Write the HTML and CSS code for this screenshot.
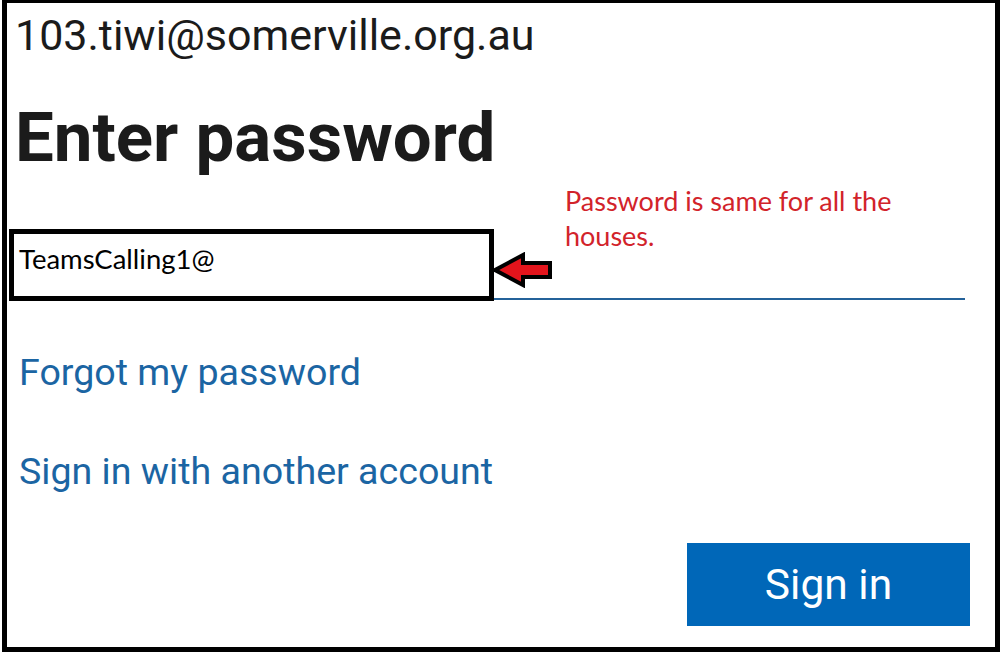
FILE: index.html
```html
<!DOCTYPE html>
<html>
<head>
<meta charset="utf-8">
<link rel="stylesheet" href="styles.css">
</head>
<body>
<div class="frame">
  <div class="email">103.tiwi@somerville.org.au</div>
  <h1 class="title">Enter password</h1>
  <div class="field">
    <div class="pw-box">TeamsCalling1@</div>
    <svg class="arrow" width="62" height="36" viewBox="0 0 62 36">
      <path d="M3 18 L31 3 L31 11 L58 11 L58 25 L31 25 L31 33 Z" fill="#e3141c" stroke="#000" stroke-width="4" stroke-linejoin="miter"/>
    </svg>
  </div>
  <a class="link first">Forgot my password</a>
  <a class="link second">Sign in with another account</a>
  <div class="actions">
    <button class="btn">Sign in</button>
  </div>
  <div class="note">Password is same for all the<br>houses.</div>
</div>
</body>
</html>
```

FILE: styles.css
```css
html, body {
  margin: 0;
  padding: 0;
  background: #fff;
}
.frame {
  position: relative;
  box-sizing: border-box;
  width: 998px;
  height: 652px;
  margin-left: 2px;
  border-style: solid;
  border-color: #000;
  border-width: 3px 5px 5px 5px;
  padding-top: 6px;
  font-family: Roboto, "Liberation Sans", sans-serif;
  color: #1b1b1b;
}
.email {
  margin-left: 8px;
  font-size: 43px;
  line-height: 52px;
  height: 52px;
}
.title {
  margin: 37px 0 0 8px;
  font-size: 69px;
  font-weight: 700;
  line-height: 80px;
  height: 80px;
}
.field {
  position: relative;
  margin: 50px 0 0 13px;
  width: 945px;
  height: 70px;
  border-bottom: 2px solid #24629a;
}
.pw-box {
  position: absolute;
  left: -11px;
  top: 1px;
  box-sizing: border-box;
  width: 485px;
  height: 72px;
  border: 5px solid #000;
  background: #fff;
  padding-left: 5px;
  font-family: Lato, "Open Sans", sans-serif;
  font-size: 27.5px;
  line-height: 50px;
  color: #000;
}
.arrow {
  position: absolute;
  left: 472px;
  top: 24px;
}
.link {
  display: block;
  margin-left: 12px;
  font-size: 37.6px;
  line-height: 44px;
  height: 44px;
  color: #1b65a3;
}
.link.first {
  margin-top: 50px;
}
.link.second {
  margin-top: 55px;
}
.actions {
  display: flex;
  justify-content: flex-end;
  margin: 50px 25px 0 0;
}
.btn {
  width: 283px;
  height: 83px;
  border: none;
  background: #0067b8;
  color: #fff;
  font-family: Roboto, "Liberation Sans", sans-serif;
  font-size: 42.5px;
  padding: 0;
}
.note {
  position: absolute;
  left: 558px;
  top: 180px;
  font-family: Lato, "Open Sans", sans-serif;
  font-size: 27px;
  line-height: 35px;
  color: #d2232a;
}
```
